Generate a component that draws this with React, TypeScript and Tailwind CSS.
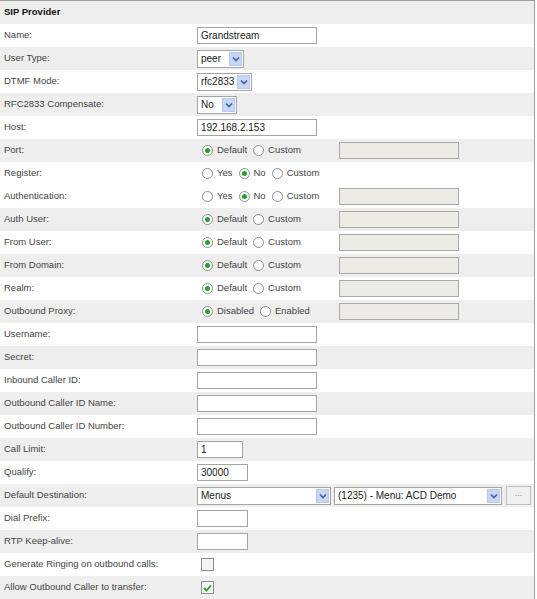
import type { ReactNode } from "react";

const font = "font-['Liberation_Sans',Arial,sans-serif]";

function TextBox({ width, value = "" }: { width: number; value?: string }) {
  return (
    <div
      className="flex h-[17px] items-center border border-[#a5a5a5] bg-white px-[3px] text-[10px] text-[#222]"
      style={{ width }}
    >
      {value}
    </div>
  );
}

function Disabled() {
  return <div className="h-[17px] w-[120px] border border-[#a9a9a9] bg-[#ecebe6]" />;
}

function Arrow() {
  return (
    <span className="flex h-[14px] w-[13px] items-center justify-center border border-[#b6c8ef] bg-[#c6d6f7]">
      <svg width="8" height="6" viewBox="0 0 8 6">
        <path d="M1 1.5 L4 4.5 L7 1.5" fill="none" stroke="#4a5f96" strokeWidth="1.6" />
      </svg>
    </span>
  );
}

function Select({ width, value }: { width: number; value: string }) {
  return (
    <div
      className="flex h-[18px] items-center justify-between border border-[#a5a5a5] bg-white pl-[3px] pr-[1px] text-[10px] text-[#222]"
      style={{ width }}
    >
      <span>{value}</span>
      <Arrow />
    </div>
  );
}

function Radio({ on }: { on?: boolean }) {
  return (
    <span className="flex h-[11px] w-[11px] items-center justify-center rounded-full border border-[#8a8f96] bg-white">
      {on ? <span className="h-[5px] w-[5px] rounded-full bg-[#2aa12a]" /> : null}
    </span>
  );
}

function Radios({ options, checked, extra }: { options: string[]; checked: number; extra?: boolean }) {
  return (
    <div className="flex items-center">
      <div className="flex w-[142px] items-center pl-[5px]">
        {options.map((o, i) => (
          <span key={o} className="mr-[6px] flex items-center gap-[4px]">
            <Radio on={i === checked} />
            <span>{o}</span>
          </span>
        ))}
      </div>
      {extra ? <Disabled /> : null}
    </div>
  );
}

function Check({ on }: { on?: boolean }) {
  return (
    <span className="ml-[4px] flex h-[13px] w-[13px] items-center justify-center border border-[#8a8f96] bg-[#f4f4f4]">
      {on ? (
        <svg width="9" height="8" viewBox="0 0 9 8">
          <path d="M1 4 L3.5 6.5 L8 1.5" fill="none" stroke="#23a023" strokeWidth="1.8" />
        </svg>
      ) : null}
    </span>
  );
}

const rows: { label: string; gray: boolean; control: ReactNode }[] = [
  { label: "Name:", gray: false, control: <TextBox width={120} value="Grandstream" /> },
  { label: "User Type:", gray: true, control: <Select width={47} value="peer" /> },
  { label: "DTMF Mode:", gray: false, control: <Select width={55} value="rfc2833" /> },
  { label: "RFC2833 Compensate:", gray: true, control: <Select width={40} value="No" /> },
  { label: "Host:", gray: false, control: <TextBox width={120} value="192.168.2.153" /> },
  { label: "Port:", gray: true, control: <Radios options={["Default", "Custom"]} checked={0} extra /> },
  { label: "Register:", gray: false, control: <Radios options={["Yes", "No", "Custom"]} checked={1} /> },
  { label: "Authentication:", gray: false, control: <Radios options={["Yes", "No", "Custom"]} checked={1} extra /> },
  { label: "Auth User:", gray: true, control: <Radios options={["Default", "Custom"]} checked={0} extra /> },
  { label: "From User:", gray: false, control: <Radios options={["Default", "Custom"]} checked={0} extra /> },
  { label: "From Domain:", gray: true, control: <Radios options={["Default", "Custom"]} checked={0} extra /> },
  { label: "Realm:", gray: false, control: <Radios options={["Default", "Custom"]} checked={0} extra /> },
  { label: "Outbound Proxy:", gray: true, control: <Radios options={["Disabled", "Enabled"]} checked={0} extra /> },
  { label: "Username:", gray: false, control: <TextBox width={120} /> },
  { label: "Secret:", gray: true, control: <TextBox width={120} /> },
  { label: "Inbound Caller ID:", gray: false, control: <TextBox width={120} /> },
  { label: "Outbound Caller ID Name:", gray: true, control: <TextBox width={120} /> },
  { label: "Outbound Caller ID Number:", gray: false, control: <TextBox width={120} /> },
  { label: "Call Limit:", gray: true, control: <TextBox width={46} value="1" /> },
  { label: "Qualify:", gray: false, control: <TextBox width={51} value="30000" /> },
  {
    label: "Default Destination:",
    gray: true,
    control: (
      <div className="flex items-center gap-[3px]">
        <Select width={134} value="Menus" />
        <Select width={168} value="(1235) - Menu: ACD Demo" />
        <div className="ml-[1px] flex h-[19px] w-[25px] items-center justify-center border border-[#c0c0c0] bg-[#f0f0f0] pb-[3px] text-[9px] text-[#888]">
          ...
        </div>
      </div>
    ),
  },
  { label: "Dial Prefix:", gray: false, control: <TextBox width={51} /> },
  { label: "RTP Keep-alive:", gray: true, control: <TextBox width={51} /> },
  { label: "Generate Ringing on outbound calls:", gray: false, control: <Check /> },
  { label: "Allow Outbound Caller to transfer:", gray: true, control: <Check on /> },
];

export default function App() {
  return (
    <div className={`${font} h-[599px] w-[537px] overflow-hidden bg-white text-[9.5px] text-[#444]`}>
      <div className="w-[535px] border-r border-t border-[#a0a0a0]">
        <div className="flex h-[23px] items-center bg-[#eeeeee] pl-[4px] font-bold text-[#111]">SIP Provider</div>
        {rows.map((r) => (
          <div
            key={r.label}
            className={`flex h-[23px] items-center ${r.gray ? "bg-[#eeeeee]" : "bg-white"}`}
          >
            <div className="w-[197px] shrink-0 pl-[4px]">{r.label}</div>
            {r.control}
          </div>
        ))}
      </div>
    </div>
  );
}
